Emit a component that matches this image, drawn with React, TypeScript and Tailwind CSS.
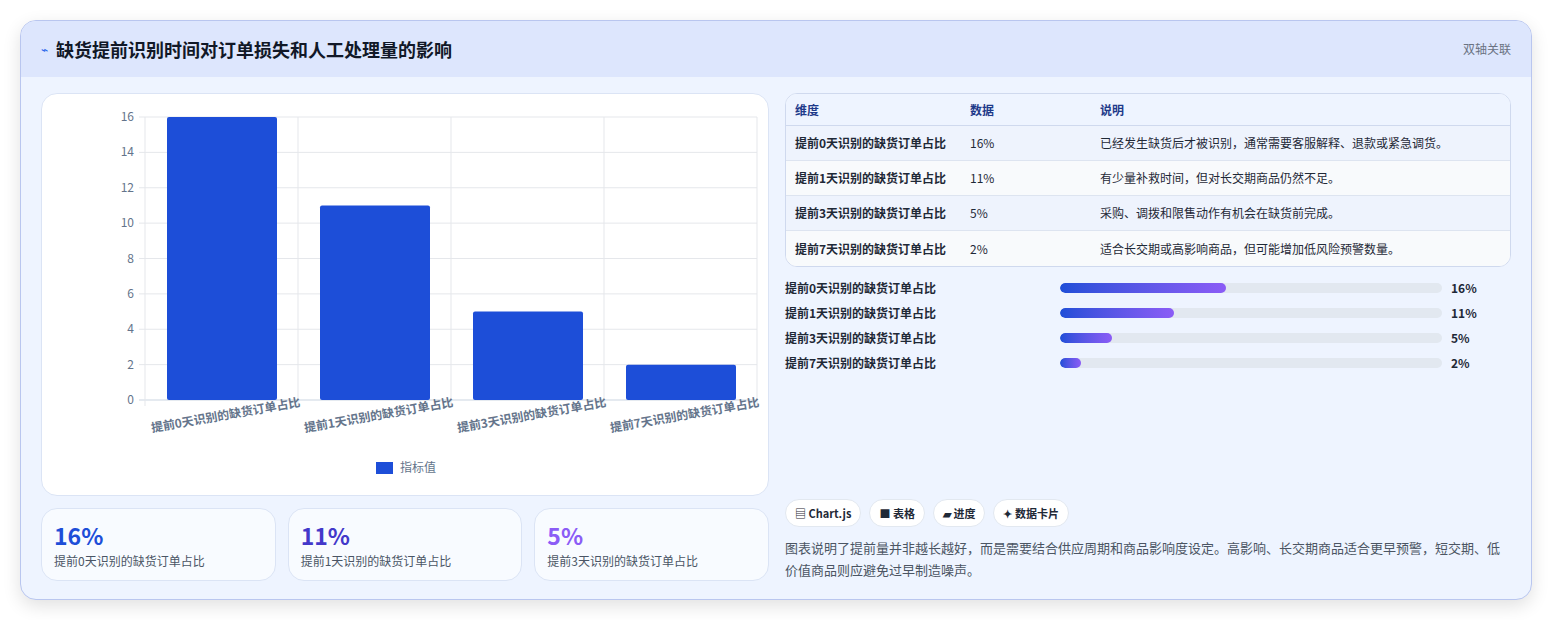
import React from "react";

const rows = [
  ["提前0天识别的缺货订单占比", "16%", "已经发生缺货后才被识别，通常需要客服解释、退款或紧急调货。"],
  ["提前1天识别的缺货订单占比", "11%", "有少量补救时间，但对长交期商品仍然不足。"],
  ["提前3天识别的缺货订单占比", "5%", "采购、调拨和限售动作有机会在缺货前完成。"],
  ["提前7天识别的缺货订单占比", "2%", "适合长交期或高影响商品，但可能增加低风险预警数量。"],
];
const vals = [16, 11, 5, 2];
const font = { fontFamily: '"Noto Sans CJK SC", "Noto Sans", sans-serif' };

function Chart() {
  const x0 = 103, x1 = 715, yTop = 23, yBot = 306;
  const step = (x1 - x0) / 4;
  const yv = (v: number) => yBot - (v / 16) * (yBot - yTop);
  return (
    <svg width="728" height="402" style={font}>
      {[0, 2, 4, 6, 8, 10, 12, 14, 16].map((v) => (
        <g key={v}>
          <line x1={x0 - 6} x2={x1} y1={yv(v)} y2={yv(v)} stroke={v === 0 ? "#cbd5e1" : "#e5e7eb"} />
          <text x={x0 - 11} y={yv(v) + 4} textAnchor="end" fontSize="12" fill="#64748b">{v}</text>
        </g>
      ))}
      {[0, 1, 2, 3, 4].map((i) => (
        <line key={i} x1={x0 + i * step} x2={x0 + i * step} y1={yTop} y2={yBot + 6} stroke="#e5e7eb" />
      ))}
      {vals.map((v, i) => (
        <g key={i}>
          <rect x={x0 + i * step + 22} y={yv(v)} width={110} height={yBot - yv(v)} rx="2" fill="#1d4ed8" />
          <text
            transform={`translate(${x0 + i * step + 77},${yBot + 20}) rotate(-10)`}
            textAnchor="end"
            x="0"
            y="0"
            fontSize="12"
            fontWeight="600"
            fill="#64748b"
            dx="80"
          >
            {rows[i][0]}
          </text>
        </g>
      ))}
      <rect x="334" y="368" width="17" height="12" fill="#1d4ed8" />
      <text x="358" y="378" fontSize="12" fill="#64748b">指标值</text>
    </svg>
  );
}

export default function App() {
  return (
    <div className="w-[1552px] h-[620px] bg-white pt-5 px-5" style={font}>
      <div className="w-[1512px] h-[580px] rounded-2xl border border-[#b9c6ef] bg-[#eef4ff] shadow-[0_6px_18px_rgba(0,0,0,0.12)] overflow-hidden">
        <div className="h-[56px] bg-[#dde6fd] flex items-center justify-between px-5">
          <div className="flex items-center gap-2">
            <span className="text-[#2563eb] text-xs">⌁</span>
            <span className="text-[18px] font-bold text-[#111827]">缺货提前识别时间对订单损失和人工处理量的影响</span>
          </div>
          <span className="text-xs text-gray-500 mr-[0px]">双轴关联</span>
        </div>
        <div className="flex gap-4 px-5 pt-4">
          <div className="w-[728px] flex flex-col gap-3">
            <div className="h-[403px] bg-white rounded-2xl border border-[#dbe4f5]">
              <Chart />
            </div>
            <div className="grid grid-cols-3 gap-3">
              {[["16%", "text-[#1d4ed8]", rows[0][0]], ["11%", "text-[#4338ca]", rows[1][0]], ["5%", "text-[#8b5cf6]", rows[2][0]]].map(([v, c, l]) => (
                <div key={v} className="h-[73px] rounded-2xl bg-[#f8fbff] border border-[#dbe4f5] px-3 pt-3">
                  <div className={`text-[23px] font-bold leading-7 ${c}`}>{v}</div>
                  <div className="text-xs text-gray-600 mt-1">{l}</div>
                </div>
              ))}
            </div>
          </div>
          <div className="w-[728px] flex flex-col">
            <div className="rounded-xl border border-[#cfd9ee] overflow-hidden bg-white">
              <div className="h-[32px] flex items-center bg-[#eef4ff] border-b border-[#cfd9ee] text-xs font-bold text-[#1e3a8a]">
                <span className="w-[184px] pl-[9px]">维度</span>
                <span className="w-[130px]">数据</span>
                <span>说明</span>
              </div>
              {rows.map((r, i) => (
                <div key={i} className={`h-[35px] flex items-center text-xs text-[#1f2937] ${i < 3 ? "border-b border-[#dde4f0]" : ""} ${i % 2 === 0 ? "bg-[#eef3fd]" : "bg-[#f8fafc]"}`}>
                  <span className="w-[184px] pl-[9px] font-semibold">{r[0]}</span>
                  <span className="w-[130px]">{r[1]}</span>
                  <span>{r[2]}</span>
                </div>
              ))}
            </div>
            <div className="mt-[12px] flex flex-col gap-[8px]">
              {rows.map((r, i) => (
                <div key={i} className="h-[17px] flex items-center text-xs font-semibold text-[#1f2937]">
                  <span className="w-[275px]">{r[0]}</span>
                  <div className="w-[382px] h-[10px] rounded-full bg-[#e2e8f0] overflow-hidden">
                    <div className="h-full rounded-full bg-gradient-to-r from-[#1d4ed8] to-[#8b5cf6]" style={{ width: `${vals[i] * 2.72 + (i === 3 ? 0 : 0)}%` }} />
                  </div>
                  <span className="ml-[9px] font-bold">{r[1]}</span>
                </div>
              ))}
            </div>
            <div className="mt-auto pb-[0px]">
              <div className="flex gap-2">
                {["▤ Chart.js", "■ 表格", "▰ 进度", "✦ 数据卡片"].map((c) => (
                  <span key={c} className="h-[28px] px-[9px] flex items-center rounded-full bg-white border border-[#e2e8f0] text-[11px] font-semibold text-[#1f2937]">{c}</span>
                ))}
              </div>
              <p className="mt-[10px] text-[13px] leading-[22px] text-[#4b5563] w-[720px]">
                图表说明了提前量并非越长越好，而是需要结合供应周期和商品影响度设定。高影响、长交期商品适合更早预警，短交期、低价值商品则应避免过早制造噪声。
              </p>
            </div>
          </div>
        </div>
      </div>
    </div>
  );
}
